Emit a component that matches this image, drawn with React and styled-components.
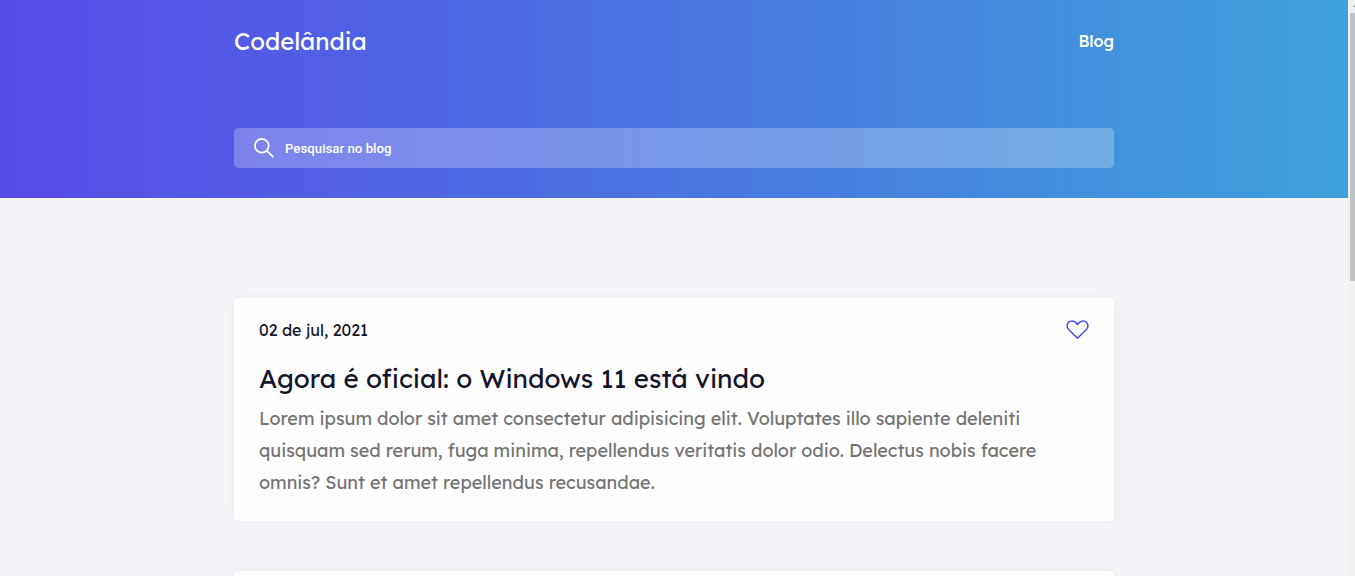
import React from 'react';
import styled, { createGlobalStyle } from 'styled-components';

const GlobalStyle = createGlobalStyle`
  * { box-sizing: border-box; margin: 0; padding: 0; }
  body { background: #f2f4f8; font-family: Lexend, Inter, sans-serif; overflow: hidden; }
`;

const Window = styled.div`
  display: flex;
  height: 576px;
  overflow: hidden;
`;

const Page = styled.div`
  flex: 1;
  min-width: 0;
  overflow: hidden;
`;

const Header = styled.header`
  height: 198px;
  padding-top: 23px;
  background: linear-gradient(90deg, #574ae8 0%, #3ea1db 100%);
`;

const Container = styled.div`
  width: 880px;
  margin: 0 auto;
`;

const Nav = styled.nav`
  display: flex;
  align-items: center;
  justify-content: space-between;
  height: 36px;
  color: #fff;
`;

const Logo = styled.h1`
  font-size: 24px;
  font-weight: 400;
  line-height: 36px;
  white-space: nowrap;
`;

const NavLink = styled.a`
  font-size: 16px;
  font-weight: 500;
  line-height: 20px;
`;

const SearchBar = styled.label`
  display: flex;
  align-items: center;
  gap: 11px;
  height: 40px;
  margin-top: 69px;
  padding-left: 20px;
  border-radius: 5px;
  background: rgba(255, 255, 255, 0.25);
  color: #fff;
  font: 500 13.25px/20px Roboto, sans-serif;
`;

const SearchText = styled.span`
  padding-top: 1px;
`;

const Icon = styled.svg`
  display: block;
  fill: none;
  stroke: currentColor;
  stroke-width: ${({ $stroke }) => $stroke};
  stroke-linejoin: round;
`;

const Posts = styled.main`
  display: flex;
  flex-direction: column;
  gap: 50px;
  padding-top: 100px;
`;

const Card = styled.article`
  height: 223px;
  padding: 18px 25px 0;
  border-radius: 5px;
  background: #fefefe;
  box-shadow: 0 0 10px rgba(0, 0, 0, 0.04);
`;

const CardTop = styled.div`
  display: flex;
  align-items: center;
  justify-content: space-between;
  height: 28px;
  color: #4b4de6;
`;

const PostDate = styled.time`
  color: #14142b;
  font-size: 16px;
  font-weight: 400;
  line-height: 20px;
`;

const Title = styled.h2`
  margin-top: 17px;
  color: #14142b;
  font-size: 26px;
  font-weight: 400;
  line-height: 36px;
`;

const Excerpt = styled.p`
  margin-top: 6px;
  color: #737373;
  font-size: 18px;
  font-weight: 400;
  line-height: 32px;
`;

const Scrollbar = styled.div`
  display: flex;
  flex-direction: column;
  align-items: flex-end;
  width: 7px;
  background: #f0f0f0;
`;

const ScrollArrow = styled.svg`
  width: 5px;
  height: 13px;
`;

const Thumb = styled.div`
  width: 5px;
  height: 268px;
  background: #c1c1c1;
`;

const SearchIcon = () => (
  <Icon width="20" height="20" viewBox="0 0 20 20" $stroke={1.7}>
    <circle cx="7.8" cy="7.8" r="6.9" />
    <path d="M12.7 12.7L19.2 19.2" />
  </Icon>
);

const HeartIcon = () => (
  <Icon width="23" height="20" viewBox="0 0 23 20" $stroke={1.5}>
    <path d="M11.5 18.2L2.4 9.2C.6 7.4.6 4.3 2.4 2.4C4.3.5 7.6.5 9.5 2.4L11.5 4.4L13.5 2.4C15.4.5 18.7.5 20.6 2.4C22.4 4.3 22.4 7.4 20.6 9.2Z" />
  </Icon>
);

export default function App() {
  return (
    <>
      <GlobalStyle />
      <Window>
        <Page>
          <Header>
            <Container>
              <Nav>
                <Logo>Codelândia</Logo>
                <NavLink>Blog</NavLink>
              </Nav>
              <SearchBar>
                <SearchIcon />
                <SearchText>Pesquisar no blog</SearchText>
              </SearchBar>
            </Container>
          </Header>
          <Container>
            <Posts>
              <Card>
                <CardTop>
                  <PostDate>02 de jul, 2021</PostDate>
                  <HeartIcon />
                </CardTop>
                <Title>Agora é oficial: o Windows 11 está vindo</Title>
                <Excerpt>
                  Lorem ipsum dolor sit amet consectetur adipisicing elit. Voluptates illo sapiente deleniti
                  quisquam sed rerum, fuga minima, repellendus veritatis dolor odio. Delectus nobis facere
                  omnis? Sunt et amet repellendus recusandae.
                </Excerpt>
              </Card>
              <Card />
            </Posts>
          </Container>
        </Page>
        <Scrollbar>
          <ScrollArrow viewBox="0 0 5 13">
            <path d="M3 7V6h1V5h1v2z" fill="#b5a294" />
          </ScrollArrow>
          <Thumb />
        </Scrollbar>
      </Window>
    </>
  );
}
